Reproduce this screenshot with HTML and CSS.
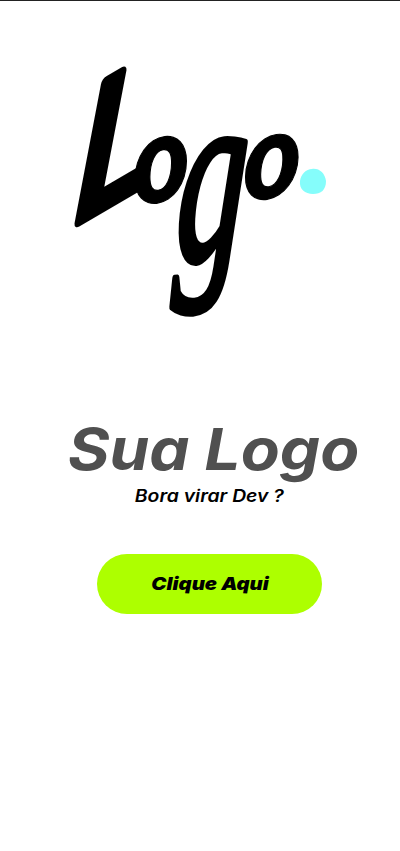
FILE: index.html
```html
<!DOCTYPE html>
<html lang="pt-BR">
<head>
<meta charset="utf-8">
<title>Sua Logo</title>
<link rel="stylesheet" href="styles.css">
</head>
<body>
<main class="page">
  <svg class="logo" viewBox="60 50 280 280" role="img" aria-label="Logo.">
    <text class="lt cap" transform="matrix(1.78 -1.04 -0.19 2.02 72 225)">L</text>
    <text class="lt" transform="matrix(1.08 -0.12 0 1.24 133 205)">o</text>
    <text class="lt serif" transform="matrix(1.38 -0.14 -0.15 2.5 174 262)">g</text>
    <text class="lt" transform="matrix(1.1 -0.16 -0.02 1.2 243 202)">o</text>
    <path class="dot" d="M312 169C319 168 325 173 326 181C326 190 321 194 313 194C305 194 299 189 300 181C301 174 306 169 312 169Z"/>
  </svg>
  <h1 class="title"><span>Sua Logo</span></h1>
  <p class="sub"><span>Bora virar Dev ?</span></p>
  <a class="btn"><span>Clique Aqui</span></a>
</main>
</body>
</html>
```
FILE: styles.css
```css
* { box-sizing: border-box; }
body { margin: 0; background: #fff; font-family: Inter, "Open Sans", sans-serif; font-style: italic; font-feature-settings: "cv11"; }
.page { min-height: 851px; border-top: 1px solid #222; padding: 49px 0 0 18px; display: flex; flex-direction: column; align-items: center; overflow: hidden; }
.logo { width: 280px; height: 280px; flex: none; margin-right: 18px; overflow: visible; }
.lt { font: italic 900 100px Lato, sans-serif; fill: #000; stroke: #000; stroke-width: 1px; stroke-linejoin: round; }
.lt.cap { font-weight: 400; font-size: 90px; stroke-width: 6px; }
.lt.serif { font: italic 400 100px "Liberation Serif", serif; stroke-width: 3px; }
.dot { fill: #85fdfb; }
.title { margin: 83px 0 0 9px; height: 72px; line-height: 72px; font-size: 58px; font-weight: 700; color: #505050; white-space: nowrap; }
.sub { margin: 0; height: 22px; line-height: 22px; font-size: 17px; font-weight: 600; color: #000; white-space: nowrap; }
.title span, .sub span, .btn span { display: inline-block; transform: scaleX(1.1); }
.sub span { transform: scaleX(1.14); }
.btn span { transform: translateX(1px) scaleX(1.13); }
.btn { margin-top: 47px; width: 225px; height: 60px; border-radius: 30px; background: #adff00; color: #000; font-size: 18px; font-weight: 900; line-height: 60px; text-align: center; }
```
